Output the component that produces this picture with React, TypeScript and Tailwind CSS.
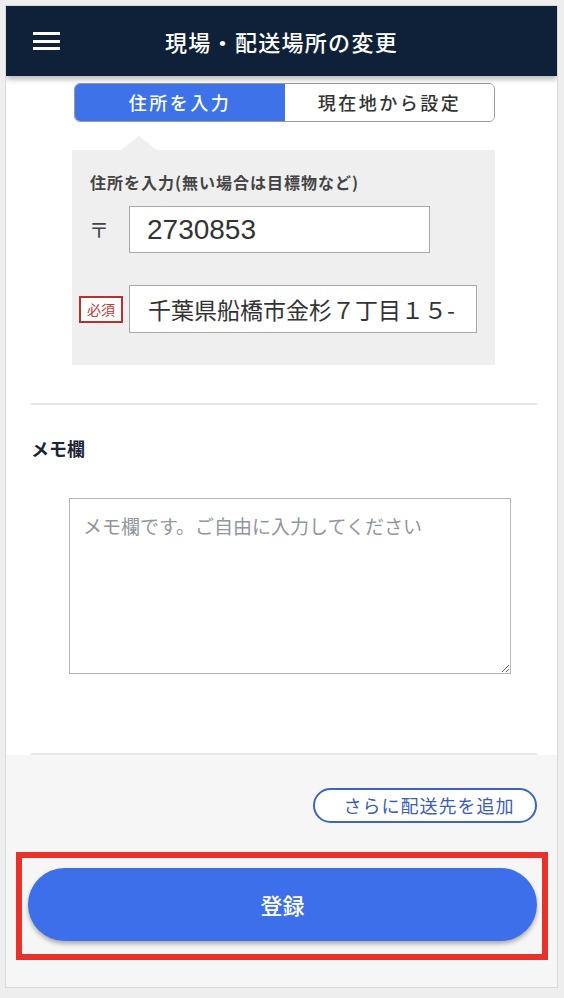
import React from 'react';

const jp = { fontFamily: '"Noto Sans CJK JP", "Noto Sans", sans-serif' };

const App: React.FC = () => {
  return (
    <div className="w-[564px] h-[998px] bg-[#eeeeee] pt-[5px] pl-[5px] pr-[6px] pb-[10px]" style={jp}>
      <div className="h-full flex flex-col border border-[#d9d9d9] bg-white overflow-hidden">
        {/* Header */}
        <header className="relative z-10 h-[70px] shrink-0 bg-[#0f2139] flex items-center shadow-[0_3px_6px_rgba(0,0,0,0.3)]">
          <div className="ml-[27px] w-[27px] flex flex-col gap-[4.5px]">
            <span className="block h-[3px] bg-white" />
            <span className="block h-[3px] bg-white" />
            <span className="block h-[3px] bg-white" />
          </div>
          <h1 className="absolute inset-x-0 text-center text-white text-[22px] font-medium tracking-[1.3px] pointer-events-none">
            現場・配送場所の変更
          </h1>
        </header>

        {/* Body */}
        <div className="flex-1 flex flex-col bg-white">
          {/* Tabs */}
          <div className="mt-[7px] ml-[68px] w-[421px] h-[39px] flex rounded-[6px] overflow-hidden border border-[#9a9a9a]">
            <button className="w-[210px] h-full bg-[#3e72e8] text-white text-[18px] tracking-[2.5px] font-medium">
              住所を入力
            </button>
            <button className="flex-1 h-full bg-white text-[#333333] text-[18px] tracking-[2.5px] font-medium">
              現在地から設定
            </button>
          </div>

          {/* Pointer + panel */}
          <div className="mt-[14px] ml-[66px] w-[423px]">
            <div className="ml-[49px] w-0 h-0 border-l-[18px] border-r-[18px] border-b-[14px] border-l-transparent border-r-transparent border-b-[#efefef]" />
            <div className="bg-[#efefef] h-[215px] pt-[22px]">
              <p className="pl-[18px] text-[16px] leading-[20px] font-bold tracking-[1px] text-[#444444]">
                住所を入力(無い場合は目標物など)
              </p>
              <div className="mt-[14px] ml-[7px] flex items-center">
                <span className="w-[50px] pl-[10px] text-[20px] text-[#444444]">〒</span>
                <input
                  readOnly
                  defaultValue="2730853"
                  className="w-[301px] h-[47px] bg-white border border-[#a9a9a9] px-[17px] text-[28px] text-[#333333] outline-none"
                  style={{ fontFamily: '"Liberation Sans", Arial, sans-serif' }}
                />
              </div>
              <div className="mt-[32px] ml-[7px] flex items-center">
                <div className="w-[50px]">
                  <span className="inline-flex items-center justify-center w-[44px] h-[27px] border-2 border-[#b8322d] bg-white text-[#c0393a] text-[14px] leading-none">
                    必須
                  </span>
                </div>
                <input
                  readOnly
                  defaultValue="千葉県船橋市金杉７丁目１５-１"
                  className="w-[348px] h-[48px] bg-white border border-[#a9a9a9] px-[18px] text-[23px] text-[#333333] outline-none"
                />
              </div>
            </div>
          </div>

          {/* Divider */}
          <div className="mt-[38px] ml-[25px] w-[506px] h-[2px] bg-[#e8e8e8]" />

          {/* Memo */}
          <h2 className="mt-[31px] ml-[25px] text-[18px] leading-[24px] font-bold text-[#1b2536]">メモ欄</h2>
          <textarea
            placeholder="メモ欄です。ご自由に入力してください"
            className="mt-[38px] ml-[63px] w-[442px] h-[176px] border border-[#b5b5b5] px-[13px] py-[14px] text-[19px] leading-[26px] text-[#333333] placeholder:text-[#8f969e] outline-none"
          />

          <div className="mt-auto ml-[25px] w-[506px] h-[2px] bg-[#e8e8e8]" />
        </div>

        {/* Footer */}
        <div className="h-[232px] shrink-0 bg-[#f6f6f6] flex flex-col">
          <div className="mt-[33px] flex justify-end pr-[20px]">
            <button className="w-[224px] h-[35px] rounded-full border-2 border-[#3e63c2] bg-white text-[#3c5cb6] text-[18px] tracking-[1px] pl-[8px]">
              さらに配送先を追加
            </button>
          </div>
          <div className="mt-[29px] ml-[10px] w-[532px] h-[108px] border-[6px] border-[#e8312a] pt-[10px] pl-[6px]">
            <button className="w-[509px] h-[73px] rounded-full bg-[#3d6fea] text-white text-[22px] font-medium shadow-[0_3px_4px_rgba(0,0,0,0.3)]">
              登録
            </button>
          </div>
        </div>
      </div>
    </div>
  );
};

export default App;
